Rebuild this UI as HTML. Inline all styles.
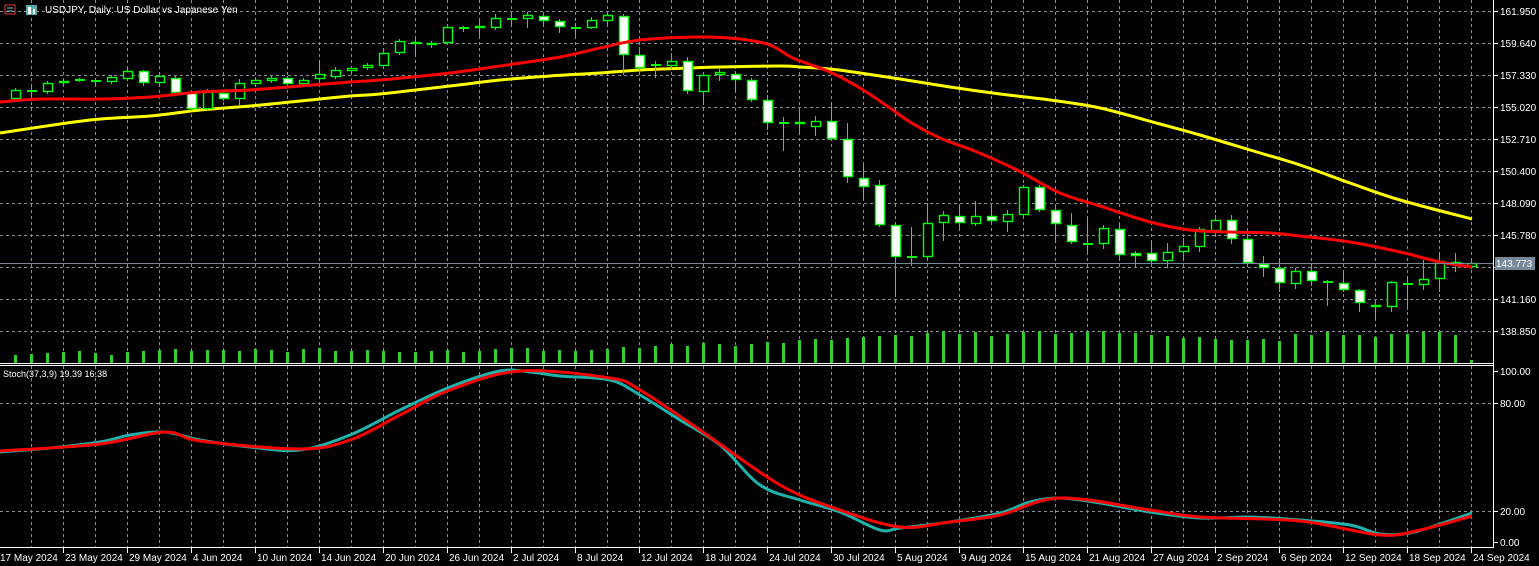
<!DOCTYPE html>
<html><head><meta charset="utf-8"><style>
html,body{margin:0;padding:0;background:#000;width:1539px;height:566px;overflow:hidden}
svg{display:block}
text{font-family:"Liberation Sans",sans-serif;font-size:10px;fill:#fff}
</style></head><body>
<svg id="s" width="1539" height="566" xmlns="http://www.w3.org/2000/svg">
<rect width="1539" height="566" fill="#000"/>
<g id="grid" stroke="#8a8f98" stroke-width="1" stroke-dasharray="3,3"></g>
<g id="vol"></g>
<path id="yel" fill="none" stroke="#ffff00" stroke-width="3"/>
<g id="cand"></g>
<path id="red" fill="none" stroke="#ff0000" stroke-width="3"/>
<line x1="0" y1="263.5" x2="1493" y2="263.5" stroke="#778899" stroke-width="1"/>
<path id="st1" fill="none" stroke="#20b2aa" stroke-width="3"/>
<path id="st2" fill="none" stroke="#ff0000" stroke-width="3"/>
<g stroke="#fff" stroke-width="1">
<line x1="1493.5" y1="0" x2="1493.5" y2="548"/>
<line x1="0" y1="363.5" x2="1493" y2="363.5"/>
<line x1="0" y1="365.5" x2="1493" y2="365.5"/>
<line x1="0" y1="547.5" x2="1493" y2="547.5"/>
</g>
<g id="axis"></g>
<rect x="1495" y="257" width="40" height="13" fill="#778899"/>
<text x="1496" y="267" style="fill:#fff">143.773</text>
<g>
<rect x="5" y="5" width="10" height="9" fill="none" stroke="#e23b3b" stroke-width="1"/>
<line x1="7" y1="8" x2="13" y2="8" stroke="#7fd0d0"/><line x1="7" y1="11" x2="13" y2="11" stroke="#7fd0d0"/>
<rect x="26" y="5" width="11" height="10" fill="#5aa" /><rect x="28" y="7" width="3" height="7" fill="#fff"/><rect x="33" y="9" width="2" height="5" fill="#fff"/>
<text x="45" y="13" style="font-size:10px">USDJPY, Daily:  US Dollar vs Japanese Yen</text>
<text x="3" y="377" style="font-size:9px">Stoch(37,3,9) 19.39 16.38</text>
</g>
</svg>
<script>
var NS="http://www.w3.org/2000/svg";
function el(p,t,a,txt){var e=document.createElementNS(NS,t);for(var k in a)e.setAttribute(k,a[k]);if(txt!=null)e.textContent=txt;document.getElementById(p).appendChild(e);return e;}
for(var x=31;x<1493;x+=32){el('grid','line',{x1:x+.5,y1:0,x2:x+.5,y2:363});el('grid','line',{x1:x+.5,y1:366,x2:x+.5,y2:547});}
for(var y=11;y<=331;y+=32){el('grid','line',{x1:0,y1:y+.5,x2:1493,y2:y+.5});}
[403,511].forEach(function(y){el('grid','line',{x1:0,y1:y+.5,x2:1493,y2:y+.5});});
var pl=["161.950","159.640","157.330","155.020","152.710","150.400","148.090","145.780","143.470","141.160","138.850"];
pl.forEach(function(l,i){var y=11+32*i;el('axis','line',{x1:1493,y1:y+.5,x2:1498,y2:y+.5,stroke:"#fff"});if(i!=8)el('axis','text',{x:1500,y:y+4},l);});
[[371,"100.00"],[403,"80.00"],[511,"20.00"],[542,"0.00"]].forEach(function(a){el('axis','line',{x1:1493,y1:a[0]+.5,x2:1498,y2:a[0]+.5,stroke:"#fff"});el('axis','text',{x:1500,y:a[0]+4},a[1]);});
var dl=["17 May 2024","23 May 2024","29 May 2024","4 Jun 2024","10 Jun 2024","14 Jun 2024","20 Jun 2024","26 Jun 2024","2 Jul 2024","8 Jul 2024","12 Jul 2024","18 Jul 2024","24 Jul 2024","30 Jul 2024","5 Aug 2024","9 Aug 2024","15 Aug 2024","21 Aug 2024","27 Aug 2024","2 Sep 2024","6 Sep 2024","12 Sep 2024","18 Sep 2024","24 Sep 2024"];
dl.forEach(function(l,i){var x=-1+64*i;if(i>0)el('axis','line',{x1:x+.5,y1:548,x2:x+.5,y2:553,stroke:"#fff"});el('axis','text',{x:i==0?0:x+2,y:561},l);});
var C=[[90,99,88,101,1],[91,91,87,97,1],[83,92,81,94,1],[81,83,79,85,1],[80,80,78,82,1],[81,81,78,85,1],[77,82,75,84,1],[71,79,69,81,1],[71,83,70,86,0],[76,83,74,85,1],[78,93,76,95,0],[93,109,91,111,0],[92,109,89,111,1],[93,99,91,101,0],[83,99,79,106,1],[80,84,77,86,1],[78,81,76,83,1],[78,84,76,86,0],[80,84,78,87,1],[74,79,60,87,1],[70,77,67,79,1],[68,71,66,74,1],[65,68,63,70,1],[53,66,51,68,1],[41,53,39,55,1],[42,44,39,57,0],[43,45,41,48,1],[27,43,25,45,1],[28,28,26,32,1],[26,28,18,37,1],[18,28,14,30,1],[19,19,13,25,1],[15,19,12,28,1],[16,21,14,26,0],[21,27,19,33,0],[28,28,23,37,1],[20,28,17,29,1],[15,21,13,24,1],[16,55,14,75,0],[55,68,47,75,0],[65,65,61,78,1],[61,66,53,70,1],[61,91,57,94,0],[75,92,73,103,1],[72,75,68,81,1],[74,80,71,92,0],[80,100,78,102,0],[100,123,95,130,0],[123,123,117,151,1],[122,124,111,135,0],[121,127,116,136,1],[121,139,103,141,0],[139,177,123,183,0],[178,187,163,199,0],[185,225,180,227,0],[225,257,222,295,0],[257,257,227,266,1],[223,257,203,260,1],[215,223,211,241,1],[216,223,207,229,0],[216,224,201,226,1],[216,221,204,224,0],[214,222,210,232,1],[187,215,185,217,1],[187,210,185,212,0],[210,224,204,243,0],[225,242,213,244,0],[244,244,219,253,1],[228,244,225,249,1],[229,255,225,260,0],[253,256,251,267,0],[253,261,243,263,0],[252,261,243,268,1],[246,252,238,259,1],[229,247,227,252,1],[220,231,215,235,1],[220,239,215,244,0],[239,263,237,265,0],[264,268,256,277,0],[268,283,258,292,0],[271,284,268,289,1],[271,281,264,286,0],[282,282,280,306,1],[283,290,273,292,0],[290,303,289,312,0],[305,307,303,320,0],[282,307,281,312,1],[284,284,276,310,1],[279,285,260,290,1],[261,279,252,292,1],[262,265,253,272,0],[263,267,261,269,1]];
var V=[8,9,10,11,12,10,8,11,12,13,14,12,13,13,12,14,13,11,14,15,12,12,13,12,11,11,12,13,11,12,14,15,15,12,13,12,13,14,16,15,17,19,17,20,19,17,19,21,20,23,24,23,25,26,27,28,27,30,32,29,31,27,29,31,32,29,30,31,32,30,30,28,27,25,26,24,23,23,24,22,29,28,31,28,28,26,29,29,31,31,28,3];
C.forEach(function(c,k){var cx=15+16*k;
 el('vol','rect',{x:cx-1,y:363-V[k],width:3,height:V[k],fill:"#32cd32"});
 el('cand','line',{x1:cx+.5,y1:c[2],x2:cx+.5,y2:c[3],stroke:"#00ff00","stroke-width":1});
 if(c[1]-c[0]<2){el('cand','rect',{x:cx-4,y:c[0]-1,width:10,height:2,fill:"#00ff00"});}
 else el('cand','rect',{x:cx-3.5,y:c[0]+.5,width:9,height:c[1]-c[0]-1,fill:c[4]?"#000":"#fff",stroke:"#00ff00","stroke-width":1.4});
});
function smooth(id,s){var p=s.trim().split(/\s+/).map(function(q){return q.split(',').map(Number);});
 var d="M"+p[0][0]+","+p[0][1];
 for(var i=0;i<p.length-1;i++){var p0=p[i-1]||p[i],p1=p[i],p2=p[i+1],p3=p[i+2]||p2;
  d+=" C"+(p1[0]+(p2[0]-p0[0])/6)+","+(p1[1]+(p2[1]-p0[1])/6)+" "+(p2[0]-(p3[0]-p1[0])/6)+","+(p2[1]-(p3[1]-p1[1])/6)+" "+p2[0]+","+p2[1];}
 document.getElementById(id).setAttribute('d',d);}
smooth('red',"0,102 40,99 100,99 150,97 200,92 250,90 300,86 350,82 380,80 450,73 500,66 560,57 600,48 640,40 700,37 740,39 770,45 793,58 830,72 860,88 890,108 910,122 940,138 977,152 1017,170 1060,193 1100,206 1150,222 1190,230 1230,232 1270,233 1300,236 1350,242 1400,252 1440,262 1472,267");
smooth('yel',"0,133 90,120 150,116 200,110 250,106 300,101 350,96 380,94 450,86 500,80 550,76 600,73 640,70 690,68 720,67 780,66 800,67 830,69 860,73 900,79 950,87 1000,94 1050,100 1100,108 1160,124 1200,135 1250,150 1300,165 1350,183 1400,200 1472,219");
smooth('st1',"0,452 50,448 100,442 130,435 165,432 200,440 250,447 300,450 350,435 400,410 450,387 500,371 530,372 560,376 610,380 640,395 680,420 720,445 760,485 800,500 840,512 880,530 900,528 950,522 1000,513 1030,502 1060,498 1100,503 1150,512 1200,518 1250,517 1300,520 1350,525 1380,534 1410,533 1440,524 1472,513");
smooth('st2',"0,451 100,444 165,432 200,441 300,449 350,440 400,415 450,390 520,371 610,378 640,390 700,430 780,485 840,510 900,527 950,522 1000,515 1060,498 1150,510 1200,517 1300,521 1380,535 1420,530 1472,516");
</script>
</body></html>
